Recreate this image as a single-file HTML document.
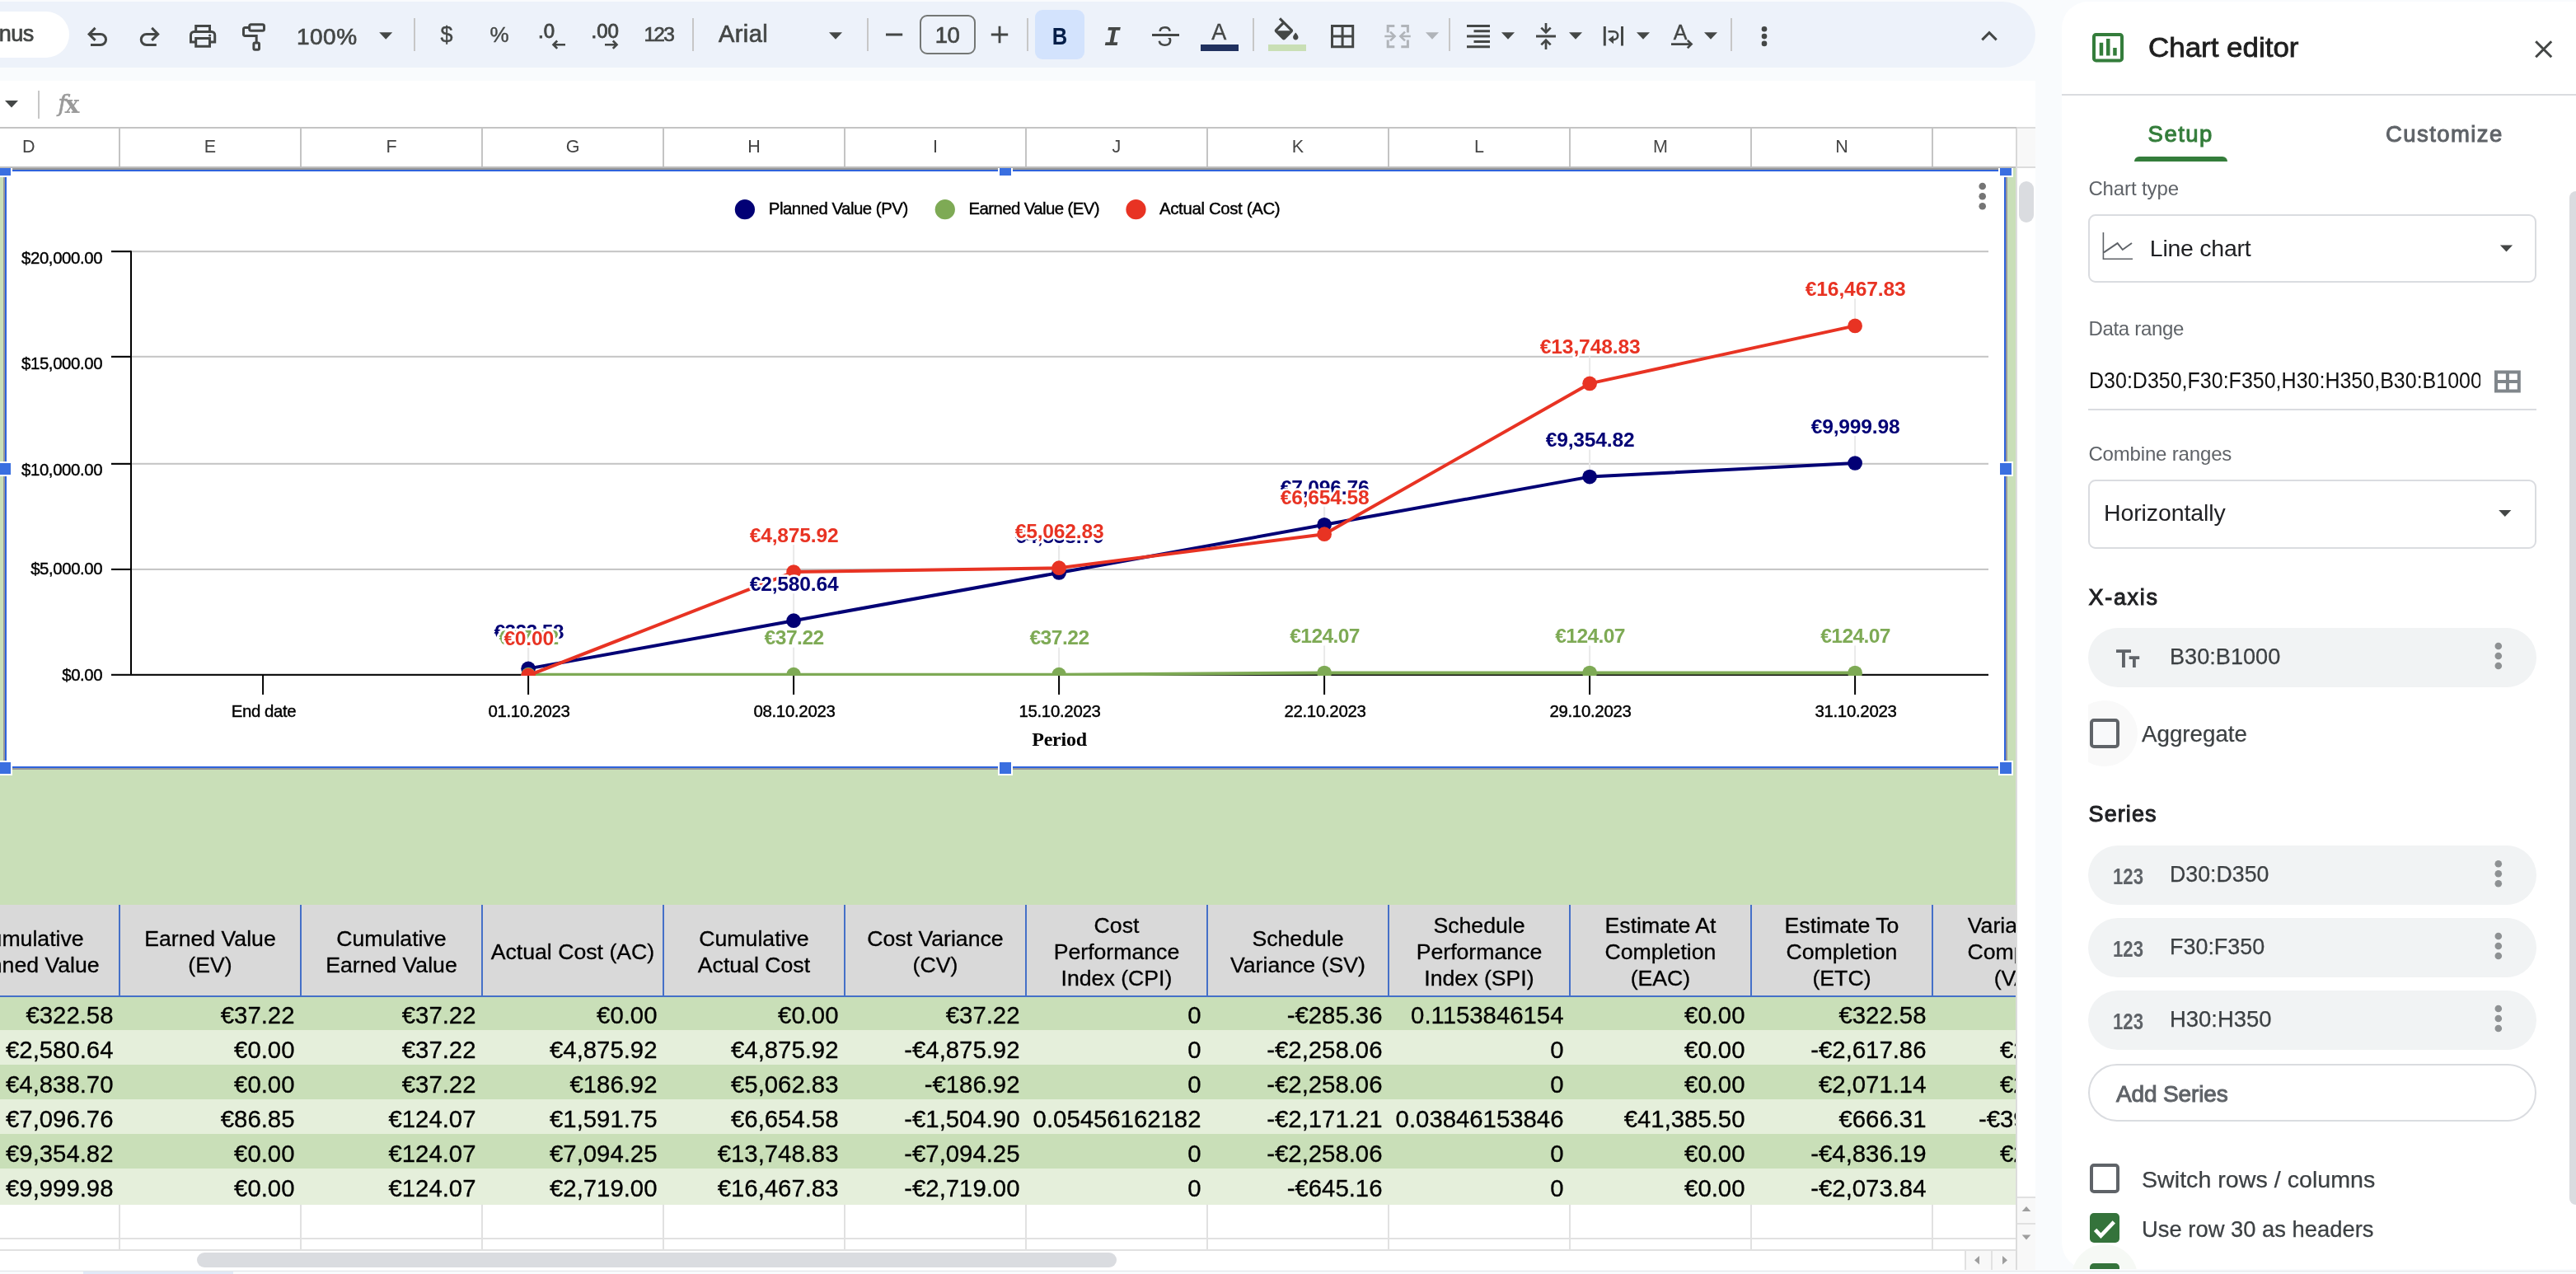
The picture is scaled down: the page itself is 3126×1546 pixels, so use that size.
<!DOCTYPE html>
<html lang="en"><head><meta charset="utf-8"><title>Chart editor</title>
<style>
html,body{margin:0;padding:0}
body{width:3126px;height:1546px;overflow:hidden;position:relative;background:#f9fbfd;font-family:"Liberation Sans",sans-serif}
.a{position:absolute}
.t{position:absolute;white-space:nowrap}
svg{position:absolute;left:0;top:0;overflow:visible}
</style></head><body>
<div id="root" style="position:absolute;left:0;top:0;width:3126px;height:1546px;overflow:hidden;will-change:transform">

<div class="a" style="left:-40px;top:2px;width:2510px;height:80px;background:#edf2fa;border-radius:40px"></div>
<div class="a" style="left:-40px;top:14px;width:124px;height:56px;background:#fff;border-radius:28px"></div>
<div class="t" style='left:-1.20px;top:28.14px;font:27px/27px "Liberation Sans",sans-serif;color:#444746;letter-spacing:-0.511px;-webkit-text-stroke:0.7px #444746;'>nus</div>
<div class="t" style='left:360.00px;top:30.90px;font:28px/28px "Liberation Sans",sans-serif;color:#444746;letter-spacing:0.472px;-webkit-text-stroke:0.7px #444746;'>100%</div>
<div class="t" style='left:534.49px;top:28.64px;font:27px/27px "Liberation Sans",sans-serif;color:#444746;-webkit-text-stroke:0.4px #444746;'>$</div>
<div class="t" style='left:594.44px;top:28.99px;font:26px/26px "Liberation Sans",sans-serif;color:#444746;-webkit-text-stroke:0.4px #444746;'>%</div>
<div class="t" style='left:653.00px;top:25.68px;font:24px/24px "Liberation Sans",sans-serif;color:#444746;letter-spacing:-0.008px;-webkit-text-stroke:0.9px #444746;'>.0</div>
<div class="t" style='left:717.50px;top:25.68px;font:24px/24px "Liberation Sans",sans-serif;color:#444746;letter-spacing:0.046px;-webkit-text-stroke:0.9px #444746;'>.00</div>
<div class="t" style='left:781.50px;top:30.06px;font:24.5px/24.5px "Liberation Sans",sans-serif;color:#444746;letter-spacing:-1.792px;-webkit-text-stroke:0.7px #444746;'>123</div>
<div class="t" style='left:872.00px;top:26.75px;font:29px/29px "Liberation Sans",sans-serif;color:#444746;letter-spacing:0.397px;-webkit-text-stroke:0.7px #444746;'>Arial</div>
<div class="a" style="left:1116px;top:18px;width:64px;height:44px;border:2px solid #747775;border-radius:9px"></div>
<div class="t" style='left:1134.75px;top:28.72px;font:27.5px/27.5px "Liberation Sans",sans-serif;color:#444746;letter-spacing:-0.544px;-webkit-text-stroke:0.7px #444746;'>10</div>
<div class="a" style="left:1256px;top:12px;width:60px;height:60px;background:#d3e3fd;border-radius:9px"></div>
<div class="t" style='left:1275.02px;top:28.27px;font:bold 30.4px/30.4px "Liberation Sans",sans-serif;color:#041e49;transform:scaleX(0.84);'>B</div>
<div class="t" style='left:1340.10px;top:29.61px;font:italic bold 33px/33px "Liberation Mono",monospace;color:#444746;'>I</div>
<div class="t" style='left:1402.49px;top:27.00px;font:34.5px/34.5px "Liberation Sans",sans-serif;color:#444746;transform:scaleX(0.8);'>S</div>
<div class="a" style="left:1398px;top:38px;width:33px;height:8px;background:#edf2fa"></div>
<div class="a" style="left:1398px;top:40.5px;width:32.5px;height:3px;background:#444746"></div>
<div class="t" style='left:1470.30px;top:25.64px;font:27px/27px "Liberation Sans",sans-serif;color:#444746;-webkit-text-stroke:0.4px #444746;'>A</div>
<div class="a" style="left:1457px;top:54px;width:46px;height:7.6px;background:#20315f"></div>
<div class="a" style="left:1539px;top:54px;width:46px;height:7.6px;background:#c9dfb5"></div>
<div class="t" style='left:2030.66px;top:26.84px;font:25px/25px "Liberation Sans",sans-serif;color:#444746;-webkit-text-stroke:0.4px #444746;'>A</div>
<svg width="2470" height="100" viewBox="0 0 2470 100">
<rect x="502" y="22" width="2" height="40" fill="#c7c7c7"/>
<rect x="840" y="22" width="2" height="40" fill="#c7c7c7"/>
<rect x="1052" y="22" width="2" height="40" fill="#c7c7c7"/>
<rect x="1246" y="22" width="2" height="40" fill="#c7c7c7"/>
<rect x="1520" y="22" width="2" height="40" fill="#c7c7c7"/>
<rect x="1758" y="22" width="2" height="40" fill="#c7c7c7"/>
<rect x="2100" y="22" width="2" height="40" fill="#c7c7c7"/>
<path d="M460.2 39.3 h16 l-8 8.4z" fill="#444746"/>
<path d="M1006 39.3 h16 l-8 8.4z" fill="#444746"/>
<path d="M1730 39.3 h16 l-8 8.4z" fill="#b0b4b9"/>
<path d="M1822 39.3 h16 l-8 8.4z" fill="#444746"/>
<path d="M1904 39.3 h16 l-8 8.4z" fill="#444746"/>
<path d="M1986 39.3 h16 l-8 8.4z" fill="#444746"/>
<path d="M2068 39.3 h16 l-8 8.4z" fill="#444746"/>
<path d="M115.6 33.9 L108.1 41.4 L115.6 48.9 M108.1 41.4 H122 A6.55 6.55 0 0 1 122 54.5 H110" fill="none" stroke="#444746" stroke-width="3"/>
<path d="M184.2 33.9 L191.7 41.4 L184.2 48.9 M191.7 41.4 H177.8 A6.55 6.55 0 0 0 177.8 54.5 H189.8" fill="none" stroke="#444746" stroke-width="3"/>
<path d="M237.7 38.5 V31.5 H254.5 V38.5 M237.7 51 H231.5 V42.5 a4 4 0 0 1 4 -4 H256.7 a4 4 0 0 1 4 4 V51 H254.5 M237.7 46.5 H254.5 V56.2 H237.7 Z" fill="none" stroke="#444746" stroke-width="3"/>
<circle cx="254.6" cy="43" r="1.6" fill="#444746"/>
<rect x="302.7" y="29.8" width="17.8" height="7.4" rx="2" fill="none" stroke="#444746" stroke-width="3"/>
<path d="M302 33.5 H297.2 a1.7 1.7 0 0 0 -1.7 1.7 V41.8 a1.7 1.7 0 0 0 1.7 1.7 H311.2 V51.5" fill="none" stroke="#444746" stroke-width="3"/>
<rect x="307.9" y="52" width="6.6" height="8.3" rx="1.5" fill="none" stroke="#444746" stroke-width="3"/>
<path d="M686 54.2 H671.5 M676.2 49.5 L671.5 54.2 L676.2 58.9" fill="none" stroke="#444746" stroke-width="2.6"/>
<path d="M734 54.2 H748.5 M743.8 49.5 L748.5 54.2 L743.8 58.9" fill="none" stroke="#444746" stroke-width="2.6"/>
<path d="M1075 42 H1095.2 M1202.8 42 H1223.2 M1213 31.8 V52.2" fill="none" stroke="#444746" stroke-width="2.8"/>
<path transform="translate(1541.90 21.2) scale(1.6)" fill="#444746" d="M16.56 8.94L7.62 0 6.21 1.41l2.38 2.38-5.15 5.15c-.59.59-.59 1.54 0 2.12l5.5 5.5c.29.29.68.44 1.06.44s.77-.15 1.06-.44l5.5-5.5c.59-.58.59-1.53 0-2.12zM5.21 10L10 5.21 14.79 10H5.21zM19 11.5s-2 2.17-2 3.5c0 1.1.9 2 2 2s2-.9 2-2c0-1.33-2-3.5-2-3.5z"/>
<path d="M1616.5 31.5 H1641.7 V56.7 H1616.5 Z M1629.1 31.5 V56.7 M1616.5 44.1 H1641.7" fill="none" stroke="#444746" stroke-width="3"/>
<path d="M1692.3 31.4 H1684.2 V39.6 M1684.2 48.4 V56.8 H1692.3 M1700.3 31.4 H1708.4 V39.6 M1708.4 48.4 V56.8 H1700.3" fill="none" stroke="#b0b4b9" stroke-width="3"/>
<path d="M1680.3 44 H1691 M1711.8 44 H1701" fill="none" stroke="#b0b4b9" stroke-width="2.6"/>
<path d="M1687 38.6 L1692.6 44 L1687 49.4 M1705 38.6 L1699.4 44 L1705 49.4" fill="none" stroke="#b0b4b9" stroke-width="2.6"/>
<path d="M1780 31.5 H1808 M1788.5 37.8 H1808 M1780 44.1 H1808 M1788.5 50.4 H1808 M1780 56.7 H1808" fill="none" stroke="#444746" stroke-width="3"/>
<path d="M1864 44 H1888" fill="none" stroke="#444746" stroke-width="3"/>
<path d="M1876 28 V38.5 M1870.3 33.6 L1876 39.3 L1881.7 33.6 M1876 60 V49.5 M1870.3 54.4 L1876 48.7 L1881.7 54.4" fill="none" stroke="#444746" stroke-width="2.7"/>
<path d="M1947.3 32 V55.5 M1968.5 32 V55.5" fill="none" stroke="#444746" stroke-width="3"/>
<path d="M1951.5 38.3 H1958.3 a4.9 4.9 0 0 1 0 9.8 H1956" fill="none" stroke="#444746" stroke-width="2.6"/>
<path d="M1951.6 48.1 L1958 43 V53.2 Z" fill="#444746"/>
<path d="M2028 53.6 H2052 M2047.8 48.9 L2052.6 53.6 L2047.8 58.3" fill="none" stroke="#444746" stroke-width="2.6"/>
<circle cx="2141" cy="35.3" r="3.3" fill="#444746"/>
<circle cx="2141" cy="44.1" r="3.3" fill="#444746"/>
<circle cx="2141" cy="52.9" r="3.3" fill="#444746"/>
<path d="M2405.3 48.4 L2414 39.7 L2422.7 48.4" fill="none" stroke="#444746" stroke-width="3"/>
</svg>
<div class="a" style="left:0;top:98px;width:2470px;height:58px;background:#fff"></div>
<svg width="200" height="160"><path d="M6 122 h16 l-8 8.4z" fill="#444746"/><rect x="46" y="110" width="2" height="34" fill="#c7c7c7"/></svg>
<div class="t" style="left:70.5px;top:112.11px;font:italic 28px/28px 'DejaVu Serif',serif;color:#9a9a9a;-webkit-text-stroke:0.7px #9a9a9a">f</div>
<div class="t" style="left:78.6px;top:111.52px;font:bold 30px/30px 'DejaVu Serif',serif;color:#9a9a9a">x</div>
<div class="a" style="left:0;top:154px;width:2447px;height:2px;background:#c4c4c4"></div><div class="a" style="left:2447px;top:154px;width:23px;height:2px;background:#dcdcdc"></div>
<div class="a" style="left:0;top:156px;width:2446px;height:47px;background:#fff"></div>
<div class="a" style="left:2446px;top:156px;width:24px;height:47px;background:#f8f8f8;border-left:2px solid #d8d8d8;box-sizing:border-box"></div>
<div class="a" style="left:144px;top:156px;width:2px;height:47px;background:#c4c4c4"></div>
<div class="a" style="left:364px;top:156px;width:2px;height:47px;background:#c4c4c4"></div>
<div class="a" style="left:584px;top:156px;width:2px;height:47px;background:#c4c4c4"></div>
<div class="a" style="left:804px;top:156px;width:2px;height:47px;background:#c4c4c4"></div>
<div class="a" style="left:1024px;top:156px;width:2px;height:47px;background:#c4c4c4"></div>
<div class="a" style="left:1244px;top:156px;width:2px;height:47px;background:#c4c4c4"></div>
<div class="a" style="left:1464px;top:156px;width:2px;height:47px;background:#c4c4c4"></div>
<div class="a" style="left:1684px;top:156px;width:2px;height:47px;background:#c4c4c4"></div>
<div class="a" style="left:1904px;top:156px;width:2px;height:47px;background:#c4c4c4"></div>
<div class="a" style="left:2124px;top:156px;width:2px;height:47px;background:#c4c4c4"></div>
<div class="a" style="left:2344px;top:156px;width:2px;height:47px;background:#c4c4c4"></div>
<div class="t" style='left:27.04px;top:168.40px;font:21.5px/21.5px "Liberation Sans",sans-serif;color:#444;'>D</div>
<div class="t" style='left:247.83px;top:168.40px;font:21.5px/21.5px "Liberation Sans",sans-serif;color:#444;'>E</div>
<div class="t" style='left:468.43px;top:168.40px;font:21.5px/21.5px "Liberation Sans",sans-serif;color:#444;'>F</div>
<div class="t" style='left:686.64px;top:168.40px;font:21.5px/21.5px "Liberation Sans",sans-serif;color:#444;'>G</div>
<div class="t" style='left:907.24px;top:168.40px;font:21.5px/21.5px "Liberation Sans",sans-serif;color:#444;'>H</div>
<div class="t" style='left:1132.01px;top:168.40px;font:21.5px/21.5px "Liberation Sans",sans-serif;color:#444;'>I</div>
<div class="t" style='left:1349.62px;top:168.40px;font:21.5px/21.5px "Liberation Sans",sans-serif;color:#444;'>J</div>
<div class="t" style='left:1567.83px;top:168.40px;font:21.5px/21.5px "Liberation Sans",sans-serif;color:#444;'>K</div>
<div class="t" style='left:1789.02px;top:168.40px;font:21.5px/21.5px "Liberation Sans",sans-serif;color:#444;'>L</div>
<div class="t" style='left:2006.05px;top:168.40px;font:21.5px/21.5px "Liberation Sans",sans-serif;color:#444;'>M</div>
<div class="t" style='left:2227.24px;top:168.40px;font:21.5px/21.5px "Liberation Sans",sans-serif;color:#444;'>N</div>
<div class="a" style="left:0;top:202px;width:2446px;height:3px;background:#bdbdbd"></div><div class="a" style="left:2446px;top:202px;width:24px;height:2px;background:#dcdcdc"></div>
<div class="a" style="left:0;top:204px;width:2446px;height:894px;background:#c9dfb8"></div>
<div class="a" style="left:4px;top:204px;width:2432px;height:730px;background:#989898"></div>
<div class="a" style="left:6px;top:206px;width:2428.4px;height:726px;background:#2f63dc"></div>
<div class="a" style="left:8px;top:208px;width:2424.4px;height:722px;background:#fff"></div>
<svg width="2446" height="940" viewBox="0 0 2446 940" style="font-family:'Liberation Sans',sans-serif">
<rect x="160" y="304.2" width="2253" height="2" fill="#c4c4c4"/>
<rect x="160" y="431.8" width="2253" height="2" fill="#c4c4c4"/>
<rect x="160" y="561.8" width="2253" height="2" fill="#c4c4c4"/>
<rect x="160" y="689.9" width="2253" height="2" fill="#c4c4c4"/>
<rect x="158" y="304.3" width="2" height="515.6" fill="#000"/>
<rect x="135" y="817.8" width="2278" height="2.2" fill="#111"/>
<rect x="135" y="304.1" width="24" height="2.1" fill="#000"/>
<rect x="135" y="431.8" width="24" height="2.1" fill="#000"/>
<rect x="135" y="561.8" width="24" height="2.1" fill="#000"/>
<rect x="135" y="689.9" width="24" height="2.1" fill="#000"/>
<rect x="318.1" y="818.9" width="2" height="24" fill="#000"/>
<rect x="640.1" y="818.9" width="2" height="24" fill="#000"/>
<rect x="962.1" y="818.9" width="2" height="24" fill="#000"/>
<rect x="1284.1" y="818.9" width="2" height="24" fill="#000"/>
<rect x="1606.1" y="818.9" width="2" height="24" fill="#000"/>
<rect x="1928.1" y="818.9" width="2" height="24" fill="#000"/>
<rect x="2250.1" y="818.9" width="2" height="24" fill="#000"/>
<clipPath id="pc"><rect x="159" y="300" width="2254" height="520.0"/></clipPath>
<rect x="640.1" y="778.4" width="2" height="24" fill="#e9e9e9"/>
<rect x="962.1" y="720.2" width="2" height="24" fill="#e9e9e9"/>
<rect x="1284.1" y="662.0" width="2" height="24" fill="#e9e9e9"/>
<rect x="1606.1" y="603.8" width="2" height="24" fill="#e9e9e9"/>
<rect x="1928.1" y="545.6" width="2" height="24" fill="#e9e9e9"/>
<rect x="2250.1" y="529.0" width="2" height="24" fill="#e9e9e9"/>
<rect x="640.1" y="785.7" width="2" height="24" fill="#e9e9e9"/>
<rect x="962.1" y="785.7" width="2" height="24" fill="#e9e9e9"/>
<rect x="1284.1" y="785.7" width="2" height="24" fill="#e9e9e9"/>
<rect x="1606.1" y="783.5" width="2" height="24" fill="#e9e9e9"/>
<rect x="1928.1" y="783.5" width="2" height="24" fill="#e9e9e9"/>
<rect x="2250.1" y="783.5" width="2" height="24" fill="#e9e9e9"/>
<rect x="640.1" y="786.7" width="2" height="24" fill="#e9e9e9"/>
<rect x="962.1" y="661.1" width="2" height="24" fill="#e9e9e9"/>
<rect x="1284.1" y="656.2" width="2" height="24" fill="#e9e9e9"/>
<rect x="1606.1" y="615.2" width="2" height="24" fill="#e9e9e9"/>
<rect x="1928.1" y="432.4" width="2" height="24" fill="#e9e9e9"/>
<rect x="2250.1" y="362.4" width="2" height="24" fill="#e9e9e9"/>
<g clip-path="url(#pc)">
<polyline points="641.1,811.4 963.1,753.2 1285.1,695.0 1607.1,636.8 1929.1,578.6 2251.1,562.0" fill="none" stroke="#020075" stroke-width="4" stroke-linejoin="round"/>
<circle cx="641.1" cy="811.4" r="8.85" fill="#020075"/>
<circle cx="963.1" cy="753.2" r="8.85" fill="#020075"/>
<circle cx="1285.1" cy="695.0" r="8.85" fill="#020075"/>
<circle cx="1607.1" cy="636.8" r="8.85" fill="#020075"/>
<circle cx="1929.1" cy="578.6" r="8.85" fill="#020075"/>
<circle cx="2251.1" cy="562.0" r="8.85" fill="#020075"/>
<polyline points="641.1,818.7 963.1,818.7 1285.1,818.7 1607.1,816.5 1929.1,816.5 2251.1,816.5" fill="none" stroke="#7eaa55" stroke-width="4" stroke-linejoin="round"/>
<circle cx="641.1" cy="818.7" r="8.85" fill="#7eaa55"/>
<circle cx="963.1" cy="818.7" r="8.85" fill="#7eaa55"/>
<circle cx="1285.1" cy="818.7" r="8.85" fill="#7eaa55"/>
<circle cx="1607.1" cy="816.5" r="8.85" fill="#7eaa55"/>
<circle cx="1929.1" cy="816.5" r="8.85" fill="#7eaa55"/>
<circle cx="2251.1" cy="816.5" r="8.85" fill="#7eaa55"/>
<polyline points="641.1,819.7 963.1,694.1 1285.1,689.2 1607.1,648.2 1929.1,465.4 2251.1,395.4" fill="none" stroke="#e83323" stroke-width="4" stroke-linejoin="round"/>
<circle cx="641.1" cy="819.7" r="8.85" fill="#e83323"/>
<circle cx="963.1" cy="694.1" r="8.85" fill="#e83323"/>
<circle cx="1285.1" cy="689.2" r="8.85" fill="#e83323"/>
<circle cx="1607.1" cy="648.2" r="8.85" fill="#e83323"/>
<circle cx="1929.1" cy="465.4" r="8.85" fill="#e83323"/>
<circle cx="2251.1" cy="395.4" r="8.85" fill="#e83323"/>
</g>
<text x="599.4" y="774.9" font-size="24.6" font-weight="bold" letter-spacing="-0.632" fill="#020075" stroke="#fff" stroke-width="5.5" stroke-linejoin="round" paint-order="stroke">€322.58</text>
<text x="909.8" y="716.7" font-size="24.6" font-weight="bold" letter-spacing="-0.204" fill="#020075" stroke="#fff" stroke-width="5.5" stroke-linejoin="round" paint-order="stroke">€2,580.64</text>
<text x="1231.8" y="658.5" font-size="24.6" font-weight="bold" letter-spacing="-0.204" fill="#020075" stroke="#fff" stroke-width="5.5" stroke-linejoin="round" paint-order="stroke">€4,838.70</text>
<text x="1553.8" y="600.3" font-size="24.6" font-weight="bold" letter-spacing="-0.204" fill="#020075" stroke="#fff" stroke-width="5.5" stroke-linejoin="round" paint-order="stroke">€7,096.76</text>
<text x="1875.8" y="542.1" font-size="24.6" font-weight="bold" letter-spacing="-0.204" fill="#020075" stroke="#fff" stroke-width="5.5" stroke-linejoin="round" paint-order="stroke">€9,354.82</text>
<text x="2197.8" y="525.5" font-size="24.6" font-weight="bold" letter-spacing="-0.204" fill="#020075" stroke="#fff" stroke-width="5.5" stroke-linejoin="round" paint-order="stroke">€9,999.98</text>
<text x="605.5" y="782.2" font-size="24.6" font-weight="bold" letter-spacing="-0.490" fill="#7eaa55" stroke="#fff" stroke-width="5.5" stroke-linejoin="round" paint-order="stroke">€37.22</text>
<text x="927.5" y="782.2" font-size="24.6" font-weight="bold" letter-spacing="-0.490" fill="#7eaa55" stroke="#fff" stroke-width="5.5" stroke-linejoin="round" paint-order="stroke">€37.22</text>
<text x="1249.4" y="782.2" font-size="24.6" font-weight="bold" letter-spacing="-0.490" fill="#7eaa55" stroke="#fff" stroke-width="5.5" stroke-linejoin="round" paint-order="stroke">€37.22</text>
<text x="1565.3" y="780.0" font-size="24.6" font-weight="bold" letter-spacing="-0.632" fill="#7eaa55" stroke="#fff" stroke-width="5.5" stroke-linejoin="round" paint-order="stroke">€124.07</text>
<text x="1887.3" y="780.0" font-size="24.6" font-weight="bold" letter-spacing="-0.632" fill="#7eaa55" stroke="#fff" stroke-width="5.5" stroke-linejoin="round" paint-order="stroke">€124.07</text>
<text x="2209.3" y="780.0" font-size="24.6" font-weight="bold" letter-spacing="-0.632" fill="#7eaa55" stroke="#fff" stroke-width="5.5" stroke-linejoin="round" paint-order="stroke">€124.07</text>
<text x="611.4" y="783.2" font-size="24.6" font-weight="bold" letter-spacing="-0.212" fill="#e83323" stroke="#fff" stroke-width="5.5" stroke-linejoin="round" paint-order="stroke">€0.00</text>
<text x="909.8" y="657.6" font-size="24.6" font-weight="bold" letter-spacing="-0.204" fill="#e83323" stroke="#fff" stroke-width="5.5" stroke-linejoin="round" paint-order="stroke">€4,875.92</text>
<text x="1231.8" y="652.7" font-size="24.6" font-weight="bold" letter-spacing="-0.204" fill="#e83323" stroke="#fff" stroke-width="5.5" stroke-linejoin="round" paint-order="stroke">€5,062.83</text>
<text x="1553.8" y="611.7" font-size="24.6" font-weight="bold" letter-spacing="-0.204" fill="#e83323" stroke="#fff" stroke-width="5.5" stroke-linejoin="round" paint-order="stroke">€6,654.58</text>
<text x="1868.8" y="428.9" font-size="24.6" font-weight="bold" letter-spacing="-0.142" fill="#e83323" stroke="#fff" stroke-width="5.5" stroke-linejoin="round" paint-order="stroke">€13,748.83</text>
<text x="2190.8" y="358.9" font-size="24.6" font-weight="bold" letter-spacing="-0.142" fill="#e83323" stroke="#fff" stroke-width="5.5" stroke-linejoin="round" paint-order="stroke">€16,467.83</text>
<circle cx="903.9" cy="254.2" r="12.1" fill="#020075"/>
<circle cx="1146.8" cy="254.2" r="12.1" fill="#7eaa55"/>
<circle cx="1378.5" cy="254.2" r="12.1" fill="#e83323"/>
<text x="932.8" y="260.0" font-size="20.4" letter-spacing="-0.481" fill="#000" stroke="#000" stroke-width="0.4">Planned Value (PV)</text>
<text x="1175.6" y="260.0" font-size="20.4" letter-spacing="-0.599" fill="#000" stroke="#000" stroke-width="0.4">Earned Value (EV)</text>
<text x="1407.0" y="260.0" font-size="20.4" letter-spacing="-0.350" fill="#000" stroke="#000" stroke-width="0.4">Actual Cost (AC)</text>
<text x="26.0" y="320.0" font-size="20.4" letter-spacing="-0.390" fill="#000" stroke="#000" stroke-width="0.4">$20,000.00</text>
<text x="26.0" y="448.2" font-size="20.4" letter-spacing="-0.390" fill="#000" stroke="#000" stroke-width="0.4">$15,000.00</text>
<text x="26.0" y="577.4" font-size="20.4" letter-spacing="-0.390" fill="#000" stroke="#000" stroke-width="0.4">$10,000.00</text>
<text x="37.2" y="696.5" font-size="20.4" letter-spacing="-0.417" fill="#000" stroke="#000" stroke-width="0.4">$5,000.00</text>
<text x="75.3" y="825.5" font-size="20.4" letter-spacing="-0.430" fill="#000" stroke="#000" stroke-width="0.4">$0.00</text>
<text x="280.8" y="869.7" font-size="20.4" letter-spacing="-0.409" fill="#000" stroke="#000" stroke-width="0.4">End date</text>
<text x="592.4" y="869.7" font-size="20.4" letter-spacing="-0.290" fill="#000" stroke="#000" stroke-width="0.4">01.10.2023</text>
<text x="914.4" y="869.7" font-size="20.4" letter-spacing="-0.290" fill="#000" stroke="#000" stroke-width="0.4">08.10.2023</text>
<text x="1236.4" y="869.7" font-size="20.4" letter-spacing="-0.290" fill="#000" stroke="#000" stroke-width="0.4">15.10.2023</text>
<text x="1558.4" y="869.7" font-size="20.4" letter-spacing="-0.290" fill="#000" stroke="#000" stroke-width="0.4">22.10.2023</text>
<text x="1880.4" y="869.7" font-size="20.4" letter-spacing="-0.290" fill="#000" stroke="#000" stroke-width="0.4">29.10.2023</text>
<text x="2202.4" y="869.7" font-size="20.4" letter-spacing="-0.290" fill="#000" stroke="#000" stroke-width="0.4">31.10.2023</text>
<text x="1252.2" y="905.2" font-size="24" letter-spacing="-0.213" fill="#000" font-family="Liberation Serif,serif" font-weight="bold">Period</text>
<circle cx="2405.7" cy="226" r="4.3" fill="#757575"/>
<circle cx="2405.7" cy="238.2" r="4.3" fill="#757575"/>
<circle cx="2405.7" cy="250.3" r="4.3" fill="#757575"/>
</svg>
<div class="a" style="left:0;top:204.4px;width:2470px;height:800px;overflow:hidden"><div class="a" style="left:0;top:-204.4px">
<div class="a" style="left:-3px;top:197px;width:14px;height:14px;background:#3a6fe0;border:2px solid #fff"></div>
<div class="a" style="left:-3px;top:560px;width:14px;height:14px;background:#3a6fe0;border:2px solid #fff"></div>
<div class="a" style="left:-3px;top:923px;width:14px;height:14px;background:#3a6fe0;border:2px solid #fff"></div>
<div class="a" style="left:1211px;top:197px;width:14px;height:14px;background:#3a6fe0;border:2px solid #fff"></div>
<div class="a" style="left:1211px;top:923px;width:14px;height:14px;background:#3a6fe0;border:2px solid #fff"></div>
<div class="a" style="left:2424.5px;top:197px;width:14px;height:14px;background:#3a6fe0;border:2px solid #fff"></div>
<div class="a" style="left:2424.5px;top:560px;width:14px;height:14px;background:#3a6fe0;border:2px solid #fff"></div>
<div class="a" style="left:2424.5px;top:923px;width:14px;height:14px;background:#3a6fe0;border:2px solid #fff"></div>
</div></div>
<div class="a" style="left:0;top:202px;width:2446px;height:2.4px;background:#bdbdbd"></div>
<div class="a" style="left:0;top:156px;width:20px;height:46px;background:#fff"></div>
<div class="a" style="left:0;top:1098px;width:2446px;height:110px;background:#d9d9d9"></div>
<div class="a" style="left:0;top:1208px;width:2446px;height:42px;background:#c9dfb8"></div>
<div class="a" style="left:0;top:1250px;width:2446px;height:42px;background:#e5efdb"></div>
<div class="a" style="left:0;top:1292px;width:2446px;height:42px;background:#c9dfb8"></div>
<div class="a" style="left:0;top:1334px;width:2446px;height:42px;background:#e5efdb"></div>
<div class="a" style="left:0;top:1376px;width:2446px;height:42px;background:#c9dfb8"></div>
<div class="a" style="left:0;top:1418px;width:2446px;height:44px;background:#e5efdb"></div>
<div class="a" style="left:0;top:1461.7px;width:2446px;height:56.3px;background:#fff"></div>
<div class="a" style="left:144px;top:1098px;width:2px;height:111px;background:#4570c8"></div>
<div class="a" style="left:144px;top:1462px;width:2px;height:55px;background:#e1e1e1"></div>
<div class="a" style="left:364px;top:1098px;width:2px;height:111px;background:#4570c8"></div>
<div class="a" style="left:364px;top:1462px;width:2px;height:55px;background:#e1e1e1"></div>
<div class="a" style="left:584px;top:1098px;width:2px;height:111px;background:#4570c8"></div>
<div class="a" style="left:584px;top:1462px;width:2px;height:55px;background:#e1e1e1"></div>
<div class="a" style="left:804px;top:1098px;width:2px;height:111px;background:#4570c8"></div>
<div class="a" style="left:804px;top:1462px;width:2px;height:55px;background:#e1e1e1"></div>
<div class="a" style="left:1024px;top:1098px;width:2px;height:111px;background:#4570c8"></div>
<div class="a" style="left:1024px;top:1462px;width:2px;height:55px;background:#e1e1e1"></div>
<div class="a" style="left:1244px;top:1098px;width:2px;height:111px;background:#4570c8"></div>
<div class="a" style="left:1244px;top:1462px;width:2px;height:55px;background:#e1e1e1"></div>
<div class="a" style="left:1464px;top:1098px;width:2px;height:111px;background:#4570c8"></div>
<div class="a" style="left:1464px;top:1462px;width:2px;height:55px;background:#e1e1e1"></div>
<div class="a" style="left:1684px;top:1098px;width:2px;height:111px;background:#4570c8"></div>
<div class="a" style="left:1684px;top:1462px;width:2px;height:55px;background:#e1e1e1"></div>
<div class="a" style="left:1904px;top:1098px;width:2px;height:111px;background:#4570c8"></div>
<div class="a" style="left:1904px;top:1462px;width:2px;height:55px;background:#e1e1e1"></div>
<div class="a" style="left:2124px;top:1098px;width:2px;height:111px;background:#4570c8"></div>
<div class="a" style="left:2124px;top:1462px;width:2px;height:55px;background:#e1e1e1"></div>
<div class="a" style="left:2344px;top:1098px;width:2px;height:111px;background:#4570c8"></div>
<div class="a" style="left:2344px;top:1462px;width:2px;height:55px;background:#e1e1e1"></div>
<div class="a" style="left:0;top:1207.8px;width:2446px;height:2.2px;background:#4570c8"></div>
<div class="a" style="left:0;top:1502px;width:2446px;height:2px;background:#e1e1e1"></div>
<div class="a" style="left:0;top:1516px;width:2470px;height:2px;background:#e1e1e1"></div>
<div class="a" style="left:0;top:1098px;width:2446px;height:420px;overflow:hidden">
<div class="t" style='left:-31.70px;top:27.62px;font:26.67px/26.67px "Liberation Sans",sans-serif;color:#000;-webkit-text-stroke:0.3px #000;'>Cumulative</div>
<div class="t" style='left:-50.76px;top:59.82px;font:26.67px/26.67px "Liberation Sans",sans-serif;color:#000;-webkit-text-stroke:0.3px #000;'>Planned Value</div>
<div class="t" style='left:31.48px;top:118.57px;font:29.33px/29.33px "Liberation Sans",sans-serif;color:#000;-webkit-text-stroke:0.3px #000;'>€322.58</div>
<div class="t" style='left:7.02px;top:160.57px;font:29.33px/29.33px "Liberation Sans",sans-serif;color:#000;-webkit-text-stroke:0.3px #000;'>€2,580.64</div>
<div class="t" style='left:7.02px;top:202.57px;font:29.33px/29.33px "Liberation Sans",sans-serif;color:#000;-webkit-text-stroke:0.3px #000;'>€4,838.70</div>
<div class="t" style='left:7.02px;top:244.57px;font:29.33px/29.33px "Liberation Sans",sans-serif;color:#000;-webkit-text-stroke:0.3px #000;'>€7,096.76</div>
<div class="t" style='left:7.02px;top:286.57px;font:29.33px/29.33px "Liberation Sans",sans-serif;color:#000;-webkit-text-stroke:0.3px #000;'>€9,354.82</div>
<div class="t" style='left:7.02px;top:328.57px;font:29.33px/29.33px "Liberation Sans",sans-serif;color:#000;-webkit-text-stroke:0.3px #000;'>€9,999.98</div>
<div class="t" style='left:175.18px;top:27.62px;font:26.67px/26.67px "Liberation Sans",sans-serif;color:#000;-webkit-text-stroke:0.3px #000;'>Earned Value</div>
<div class="t" style='left:228.33px;top:59.82px;font:26.67px/26.67px "Liberation Sans",sans-serif;color:#000;-webkit-text-stroke:0.3px #000;'>(EV)</div>
<div class="t" style='left:267.79px;top:118.57px;font:29.33px/29.33px "Liberation Sans",sans-serif;color:#000;-webkit-text-stroke:0.3px #000;'>€37.22</div>
<div class="t" style='left:284.10px;top:160.57px;font:29.33px/29.33px "Liberation Sans",sans-serif;color:#000;-webkit-text-stroke:0.3px #000;'>€0.00</div>
<div class="t" style='left:284.10px;top:202.57px;font:29.33px/29.33px "Liberation Sans",sans-serif;color:#000;-webkit-text-stroke:0.3px #000;'>€0.00</div>
<div class="t" style='left:267.79px;top:244.57px;font:29.33px/29.33px "Liberation Sans",sans-serif;color:#000;-webkit-text-stroke:0.3px #000;'>€86.85</div>
<div class="t" style='left:284.10px;top:286.57px;font:29.33px/29.33px "Liberation Sans",sans-serif;color:#000;-webkit-text-stroke:0.3px #000;'>€0.00</div>
<div class="t" style='left:284.10px;top:328.57px;font:29.33px/29.33px "Liberation Sans",sans-serif;color:#000;-webkit-text-stroke:0.3px #000;'>€0.00</div>
<div class="t" style='left:408.30px;top:27.62px;font:26.67px/26.67px "Liberation Sans",sans-serif;color:#000;-webkit-text-stroke:0.3px #000;'>Cumulative</div>
<div class="t" style='left:395.18px;top:59.82px;font:26.67px/26.67px "Liberation Sans",sans-serif;color:#000;-webkit-text-stroke:0.3px #000;'>Earned Value</div>
<div class="t" style='left:487.79px;top:118.57px;font:29.33px/29.33px "Liberation Sans",sans-serif;color:#000;-webkit-text-stroke:0.3px #000;'>€37.22</div>
<div class="t" style='left:487.79px;top:160.57px;font:29.33px/29.33px "Liberation Sans",sans-serif;color:#000;-webkit-text-stroke:0.3px #000;'>€37.22</div>
<div class="t" style='left:487.79px;top:202.57px;font:29.33px/29.33px "Liberation Sans",sans-serif;color:#000;-webkit-text-stroke:0.3px #000;'>€37.22</div>
<div class="t" style='left:471.48px;top:244.57px;font:29.33px/29.33px "Liberation Sans",sans-serif;color:#000;-webkit-text-stroke:0.3px #000;'>€124.07</div>
<div class="t" style='left:471.48px;top:286.57px;font:29.33px/29.33px "Liberation Sans",sans-serif;color:#000;-webkit-text-stroke:0.3px #000;'>€124.07</div>
<div class="t" style='left:471.48px;top:328.57px;font:29.33px/29.33px "Liberation Sans",sans-serif;color:#000;-webkit-text-stroke:0.3px #000;'>€124.07</div>
<div class="t" style='left:595.70px;top:43.72px;font:26.67px/26.67px "Liberation Sans",sans-serif;color:#000;-webkit-text-stroke:0.3px #000;'>Actual Cost (AC)</div>
<div class="t" style='left:724.10px;top:118.57px;font:29.33px/29.33px "Liberation Sans",sans-serif;color:#000;-webkit-text-stroke:0.3px #000;'>€0.00</div>
<div class="t" style='left:667.02px;top:160.57px;font:29.33px/29.33px "Liberation Sans",sans-serif;color:#000;-webkit-text-stroke:0.3px #000;'>€4,875.92</div>
<div class="t" style='left:691.48px;top:202.57px;font:29.33px/29.33px "Liberation Sans",sans-serif;color:#000;-webkit-text-stroke:0.3px #000;'>€186.92</div>
<div class="t" style='left:667.02px;top:244.57px;font:29.33px/29.33px "Liberation Sans",sans-serif;color:#000;-webkit-text-stroke:0.3px #000;'>€1,591.75</div>
<div class="t" style='left:667.02px;top:286.57px;font:29.33px/29.33px "Liberation Sans",sans-serif;color:#000;-webkit-text-stroke:0.3px #000;'>€7,094.25</div>
<div class="t" style='left:667.02px;top:328.57px;font:29.33px/29.33px "Liberation Sans",sans-serif;color:#000;-webkit-text-stroke:0.3px #000;'>€2,719.00</div>
<div class="t" style='left:848.30px;top:27.62px;font:26.67px/26.67px "Liberation Sans",sans-serif;color:#000;-webkit-text-stroke:0.3px #000;'>Cumulative</div>
<div class="t" style='left:846.81px;top:59.82px;font:26.67px/26.67px "Liberation Sans",sans-serif;color:#000;-webkit-text-stroke:0.3px #000;'>Actual Cost</div>
<div class="t" style='left:944.10px;top:118.57px;font:29.33px/29.33px "Liberation Sans",sans-serif;color:#000;-webkit-text-stroke:0.3px #000;'>€0.00</div>
<div class="t" style='left:887.02px;top:160.57px;font:29.33px/29.33px "Liberation Sans",sans-serif;color:#000;-webkit-text-stroke:0.3px #000;'>€4,875.92</div>
<div class="t" style='left:887.02px;top:202.57px;font:29.33px/29.33px "Liberation Sans",sans-serif;color:#000;-webkit-text-stroke:0.3px #000;'>€5,062.83</div>
<div class="t" style='left:887.02px;top:244.57px;font:29.33px/29.33px "Liberation Sans",sans-serif;color:#000;-webkit-text-stroke:0.3px #000;'>€6,654.58</div>
<div class="t" style='left:870.71px;top:286.57px;font:29.33px/29.33px "Liberation Sans",sans-serif;color:#000;-webkit-text-stroke:0.3px #000;'>€13,748.83</div>
<div class="t" style='left:870.71px;top:328.57px;font:29.33px/29.33px "Liberation Sans",sans-serif;color:#000;-webkit-text-stroke:0.3px #000;'>€16,467.83</div>
<div class="t" style='left:1052.24px;top:27.62px;font:26.67px/26.67px "Liberation Sans",sans-serif;color:#000;-webkit-text-stroke:0.3px #000;'>Cost Variance</div>
<div class="t" style='left:1107.59px;top:59.82px;font:26.67px/26.67px "Liberation Sans",sans-serif;color:#000;-webkit-text-stroke:0.3px #000;'>(CV)</div>
<div class="t" style='left:1147.79px;top:118.57px;font:29.33px/29.33px "Liberation Sans",sans-serif;color:#000;-webkit-text-stroke:0.3px #000;'>€37.22</div>
<div class="t" style='left:1097.25px;top:160.57px;font:29.33px/29.33px "Liberation Sans",sans-serif;color:#000;-webkit-text-stroke:0.3px #000;'>-€4,875.92</div>
<div class="t" style='left:1121.71px;top:202.57px;font:29.33px/29.33px "Liberation Sans",sans-serif;color:#000;-webkit-text-stroke:0.3px #000;'>-€186.92</div>
<div class="t" style='left:1097.25px;top:244.57px;font:29.33px/29.33px "Liberation Sans",sans-serif;color:#000;-webkit-text-stroke:0.3px #000;'>-€1,504.90</div>
<div class="t" style='left:1097.25px;top:286.57px;font:29.33px/29.33px "Liberation Sans",sans-serif;color:#000;-webkit-text-stroke:0.3px #000;'>-€7,094.25</div>
<div class="t" style='left:1097.25px;top:328.57px;font:29.33px/29.33px "Liberation Sans",sans-serif;color:#000;-webkit-text-stroke:0.3px #000;'>-€2,719.00</div>
<div class="t" style='left:1327.58px;top:11.52px;font:26.67px/26.67px "Liberation Sans",sans-serif;color:#000;-webkit-text-stroke:0.3px #000;'>Cost</div>
<div class="t" style='left:1278.66px;top:43.72px;font:26.67px/26.67px "Liberation Sans",sans-serif;color:#000;-webkit-text-stroke:0.3px #000;'>Performance</div>
<div class="t" style='left:1287.56px;top:75.92px;font:26.67px/26.67px "Liberation Sans",sans-serif;color:#000;-webkit-text-stroke:0.3px #000;'>Index (CPI)</div>
<div class="t" style='left:1441.19px;top:118.57px;font:29.33px/29.33px "Liberation Sans",sans-serif;color:#000;-webkit-text-stroke:0.3px #000;'>0</div>
<div class="t" style='left:1441.19px;top:160.57px;font:29.33px/29.33px "Liberation Sans",sans-serif;color:#000;-webkit-text-stroke:0.3px #000;'>0</div>
<div class="t" style='left:1441.19px;top:202.57px;font:29.33px/29.33px "Liberation Sans",sans-serif;color:#000;-webkit-text-stroke:0.3px #000;'>0</div>
<div class="t" style='left:1253.61px;top:244.57px;font:29.33px/29.33px "Liberation Sans",sans-serif;color:#000;-webkit-text-stroke:0.3px #000;'>0.05456162182</div>
<div class="t" style='left:1441.19px;top:286.57px;font:29.33px/29.33px "Liberation Sans",sans-serif;color:#000;-webkit-text-stroke:0.3px #000;'>0</div>
<div class="t" style='left:1441.19px;top:328.57px;font:29.33px/29.33px "Liberation Sans",sans-serif;color:#000;-webkit-text-stroke:0.3px #000;'>0</div>
<div class="t" style='left:1519.39px;top:27.62px;font:26.67px/26.67px "Liberation Sans",sans-serif;color:#000;-webkit-text-stroke:0.3px #000;'>Schedule</div>
<div class="t" style='left:1492.98px;top:59.82px;font:26.67px/26.67px "Liberation Sans",sans-serif;color:#000;-webkit-text-stroke:0.3px #000;'>Variance (SV)</div>
<div class="t" style='left:1561.71px;top:118.57px;font:29.33px/29.33px "Liberation Sans",sans-serif;color:#000;-webkit-text-stroke:0.3px #000;'>-€285.36</div>
<div class="t" style='left:1537.25px;top:160.57px;font:29.33px/29.33px "Liberation Sans",sans-serif;color:#000;-webkit-text-stroke:0.3px #000;'>-€2,258.06</div>
<div class="t" style='left:1537.25px;top:202.57px;font:29.33px/29.33px "Liberation Sans",sans-serif;color:#000;-webkit-text-stroke:0.3px #000;'>-€2,258.06</div>
<div class="t" style='left:1537.25px;top:244.57px;font:29.33px/29.33px "Liberation Sans",sans-serif;color:#000;-webkit-text-stroke:0.3px #000;'>-€2,171.21</div>
<div class="t" style='left:1537.25px;top:286.57px;font:29.33px/29.33px "Liberation Sans",sans-serif;color:#000;-webkit-text-stroke:0.3px #000;'>-€2,258.06</div>
<div class="t" style='left:1561.71px;top:328.57px;font:29.33px/29.33px "Liberation Sans",sans-serif;color:#000;-webkit-text-stroke:0.3px #000;'>-€645.16</div>
<div class="t" style='left:1739.39px;top:11.52px;font:26.67px/26.67px "Liberation Sans",sans-serif;color:#000;-webkit-text-stroke:0.3px #000;'>Schedule</div>
<div class="t" style='left:1718.66px;top:43.72px;font:26.67px/26.67px "Liberation Sans",sans-serif;color:#000;-webkit-text-stroke:0.3px #000;'>Performance</div>
<div class="t" style='left:1728.30px;top:75.92px;font:26.67px/26.67px "Liberation Sans",sans-serif;color:#000;-webkit-text-stroke:0.3px #000;'>Index (SPI)</div>
<div class="t" style='left:1712.10px;top:118.57px;font:29.33px/29.33px "Liberation Sans",sans-serif;color:#000;-webkit-text-stroke:0.3px #000;'>0.1153846154</div>
<div class="t" style='left:1881.19px;top:160.57px;font:29.33px/29.33px "Liberation Sans",sans-serif;color:#000;-webkit-text-stroke:0.3px #000;'>0</div>
<div class="t" style='left:1881.19px;top:202.57px;font:29.33px/29.33px "Liberation Sans",sans-serif;color:#000;-webkit-text-stroke:0.3px #000;'>0</div>
<div class="t" style='left:1693.61px;top:244.57px;font:29.33px/29.33px "Liberation Sans",sans-serif;color:#000;-webkit-text-stroke:0.3px #000;'>0.03846153846</div>
<div class="t" style='left:1881.19px;top:286.57px;font:29.33px/29.33px "Liberation Sans",sans-serif;color:#000;-webkit-text-stroke:0.3px #000;'>0</div>
<div class="t" style='left:1881.19px;top:328.57px;font:29.33px/29.33px "Liberation Sans",sans-serif;color:#000;-webkit-text-stroke:0.3px #000;'>0</div>
<div class="t" style='left:1947.56px;top:11.52px;font:26.67px/26.67px "Liberation Sans",sans-serif;color:#000;-webkit-text-stroke:0.3px #000;'>Estimate At</div>
<div class="t" style='left:1947.55px;top:43.72px;font:26.67px/26.67px "Liberation Sans",sans-serif;color:#000;-webkit-text-stroke:0.3px #000;'>Completion</div>
<div class="t" style='left:1978.70px;top:75.92px;font:26.67px/26.67px "Liberation Sans",sans-serif;color:#000;-webkit-text-stroke:0.3px #000;'>(EAC)</div>
<div class="t" style='left:2044.10px;top:118.57px;font:29.33px/29.33px "Liberation Sans",sans-serif;color:#000;-webkit-text-stroke:0.3px #000;'>€0.00</div>
<div class="t" style='left:2044.10px;top:160.57px;font:29.33px/29.33px "Liberation Sans",sans-serif;color:#000;-webkit-text-stroke:0.3px #000;'>€0.00</div>
<div class="t" style='left:2044.10px;top:202.57px;font:29.33px/29.33px "Liberation Sans",sans-serif;color:#000;-webkit-text-stroke:0.3px #000;'>€0.00</div>
<div class="t" style='left:1970.71px;top:244.57px;font:29.33px/29.33px "Liberation Sans",sans-serif;color:#000;-webkit-text-stroke:0.3px #000;'>€41,385.50</div>
<div class="t" style='left:2044.10px;top:286.57px;font:29.33px/29.33px "Liberation Sans",sans-serif;color:#000;-webkit-text-stroke:0.3px #000;'>€0.00</div>
<div class="t" style='left:2044.10px;top:328.57px;font:29.33px/29.33px "Liberation Sans",sans-serif;color:#000;-webkit-text-stroke:0.3px #000;'>€0.00</div>
<div class="t" style='left:2165.58px;top:11.52px;font:26.67px/26.67px "Liberation Sans",sans-serif;color:#000;-webkit-text-stroke:0.3px #000;'>Estimate To</div>
<div class="t" style='left:2167.55px;top:43.72px;font:26.67px/26.67px "Liberation Sans",sans-serif;color:#000;-webkit-text-stroke:0.3px #000;'>Completion</div>
<div class="t" style='left:2199.45px;top:75.92px;font:26.67px/26.67px "Liberation Sans",sans-serif;color:#000;-webkit-text-stroke:0.3px #000;'>(ETC)</div>
<div class="t" style='left:2231.48px;top:118.57px;font:29.33px/29.33px "Liberation Sans",sans-serif;color:#000;-webkit-text-stroke:0.3px #000;'>€322.58</div>
<div class="t" style='left:2197.25px;top:160.57px;font:29.33px/29.33px "Liberation Sans",sans-serif;color:#000;-webkit-text-stroke:0.3px #000;'>-€2,617.86</div>
<div class="t" style='left:2207.02px;top:202.57px;font:29.33px/29.33px "Liberation Sans",sans-serif;color:#000;-webkit-text-stroke:0.3px #000;'>€2,071.14</div>
<div class="t" style='left:2231.48px;top:244.57px;font:29.33px/29.33px "Liberation Sans",sans-serif;color:#000;-webkit-text-stroke:0.3px #000;'>€666.31</div>
<div class="t" style='left:2197.25px;top:286.57px;font:29.33px/29.33px "Liberation Sans",sans-serif;color:#000;-webkit-text-stroke:0.3px #000;'>-€4,836.19</div>
<div class="t" style='left:2197.25px;top:328.57px;font:29.33px/29.33px "Liberation Sans",sans-serif;color:#000;-webkit-text-stroke:0.3px #000;'>-€2,073.84</div>
<div class="t" style='left:2387.79px;top:11.52px;font:26.67px/26.67px "Liberation Sans",sans-serif;color:#000;-webkit-text-stroke:0.3px #000;'>Variance At</div>
<div class="t" style='left:2387.55px;top:43.72px;font:26.67px/26.67px "Liberation Sans",sans-serif;color:#000;-webkit-text-stroke:0.3px #000;'>Completion</div>
<div class="t" style='left:2419.69px;top:75.92px;font:26.67px/26.67px "Liberation Sans",sans-serif;color:#000;-webkit-text-stroke:0.3px #000;'>(VAC)</div>
<div class="t" style='left:2484.10px;top:118.57px;font:29.33px/29.33px "Liberation Sans",sans-serif;color:#000;-webkit-text-stroke:0.3px #000;'>€0.00</div>
<div class="t" style='left:2427.02px;top:160.57px;font:29.33px/29.33px "Liberation Sans",sans-serif;color:#000;-webkit-text-stroke:0.3px #000;'>€2,000.00</div>
<div class="t" style='left:2427.02px;top:202.57px;font:29.33px/29.33px "Liberation Sans",sans-serif;color:#000;-webkit-text-stroke:0.3px #000;'>€2,000.00</div>
<div class="t" style='left:2400.94px;top:244.57px;font:29.33px/29.33px "Liberation Sans",sans-serif;color:#000;-webkit-text-stroke:0.3px #000;'>-€39,385.50</div>
<div class="t" style='left:2427.02px;top:286.57px;font:29.33px/29.33px "Liberation Sans",sans-serif;color:#000;-webkit-text-stroke:0.3px #000;'>€2,000.00</div>
<div class="t" style='left:2484.10px;top:328.57px;font:29.33px/29.33px "Liberation Sans",sans-serif;color:#000;-webkit-text-stroke:0.3px #000;'>€0.00</div>
</div>
<div class="a" style="left:2446px;top:204px;width:2px;height:1337px;background:#dcdcdc"></div>
<div class="a" style="left:2448px;top:204px;width:22px;height:1248px;background:#fff"></div>
<div class="a" style="left:2450px;top:220px;width:17.6px;height:50px;border-radius:9px;background:#dadce0"></div>
<div class="a" style="left:2448px;top:1452px;width:22px;height:89px;background:#f8f8f8"></div>
<div class="a" style="left:2448px;top:1452px;width:22px;height:2px;background:#e1e1e1"></div>
<div class="a" style="left:2448px;top:1484px;width:22px;height:2px;background:#e1e1e1"></div>
<div class="a" style="left:0;top:1518px;width:2384px;height:23px;background:#fff"></div>
<div class="a" style="left:2384px;top:1518px;width:62px;height:23px;background:#f8f8f8"></div>
<div class="a" style="left:2384px;top:1518px;width:2px;height:23px;background:#e1e1e1"></div>
<div class="a" style="left:2416px;top:1518px;width:2px;height:23px;background:#e1e1e1"></div>
<div class="a" style="left:239px;top:1520px;width:1116px;height:18px;border-radius:9px;background:#dadce0"></div>
<svg width="2470" height="1546"><g fill="#9e9e9e"><path d="M2453.7 1470 h10.6 l-5.3 -6z"/><path d="M2453.7 1498.4 h10.6 l-5.3 6z"/><path d="M2402 1524 v10.6 l-6 -5.3z"/><path d="M2430 1524 v10.6 l6 -5.3z"/></g></svg>
<div class="a" style="left:0;top:1541.5px;width:3126px;height:2px;background:#e3e5e8"></div>
<div class="a" style="left:0;top:1543px;width:3126px;height:3px;background:#f9fbfd"></div>
<div class="a" style="left:101px;top:1543px;width:182px;height:3px;background:#e1e9f7"></div>
<div class="a" style="left:2502px;top:2px;width:640px;height:1538px;background:#fff;border-radius:32px 0 0 32px;overflow:hidden"></div>
<div class="a" style="left:2502px;top:0;width:624px;height:1540px;overflow:hidden"><div class="a" style="left:-2502px;top:0;width:3126px;height:1546px">
<div class="t" style='left:2607.00px;top:40.77px;font:33px/33px "Liberation Sans",sans-serif;color:#1f1f1f;transform-origin:0 0;transform:scaleX(1.0585);-webkit-text-stroke:0.8px #1f1f1f;'>Chart editor</div>
<div class="a" style="left:2502px;top:114px;width:624px;height:2px;background:#dadce0"></div>
<div class="t" style='left:2606.60px;top:149.42px;font:27.5px/27.5px "Liberation Sans",sans-serif;color:#347d3b;letter-spacing:1.467px;-webkit-text-stroke:1.0px #347d3b;'>Setup</div>
<div class="t" style='left:2895.00px;top:149.42px;font:27.5px/27.5px "Liberation Sans",sans-serif;color:#5f6368;letter-spacing:1.411px;-webkit-text-stroke:1.0px #5f6368;'>Customize</div>
<div class="a" style="left:2590px;top:190px;width:113px;height:6px;background:#347d3b;border-radius:6px 6px 0 0"></div>
<div class="t" style='left:2534.40px;top:216.68px;font:24px/24px "Liberation Sans",sans-serif;color:#5f6368;letter-spacing:-0.122px;'>Chart type</div>
<div class="a" style="left:2534px;top:259.6px;width:539.5px;height:79.8px;border:2px solid #dadce0;border-radius:9px"></div>
<div class="t" style='left:2608.80px;top:286.77px;font:28.5px/28.5px "Liberation Sans",sans-serif;color:#202124;letter-spacing:-0.256px;'>Line chart</div>
<div class="t" style='left:2534.40px;top:386.68px;font:24px/24px "Liberation Sans",sans-serif;color:#5f6368;letter-spacing:-0.305px;'>Data range</div>
<div class="a" style="left:2534px;top:440px;width:476px;height:50px;overflow:hidden">
<div class="t" style='left:0.60px;top:8.94px;font:27px/27px "Liberation Sans",sans-serif;color:#111;transform-origin:0 0;transform:scaleX(0.9263);'>D30:D350,F30:F350,H30:H350,B30:B1000</div>
</div>
<div class="a" style="left:2534px;top:496px;width:543.5px;height:2px;background:#dadce0"></div>
<div class="t" style='left:2534.40px;top:539.48px;font:24px/24px "Liberation Sans",sans-serif;color:#5f6368;letter-spacing:-0.164px;'>Combine ranges</div>
<div class="a" style="left:2534px;top:582px;width:539.5px;height:79.5px;border:2px solid #dadce0;border-radius:9px"></div>
<div class="t" style='left:2553.00px;top:608.47px;font:28.5px/28.5px "Liberation Sans",sans-serif;color:#202124;letter-spacing:-0.107px;'>Horizontally</div>
<div class="t" style='left:2534.60px;top:711.74px;font:27px/27px "Liberation Sans",sans-serif;color:#202124;letter-spacing:1.664px;-webkit-text-stroke:1.0px #202124;'>X-axis</div>
<div class="a" style="left:2534px;top:762px;width:543.5px;height:72px;border-radius:36px;background:#f1f3f4"></div>
<div class="a" style="left:2534px;top:1026px;width:543.5px;height:72px;border-radius:36px;background:#f1f3f4"></div>
<div class="a" style="left:2534px;top:1114px;width:543.5px;height:72px;border-radius:36px;background:#f1f3f4"></div>
<div class="a" style="left:2534px;top:1202px;width:543.5px;height:72px;border-radius:36px;background:#f1f3f4"></div>
<div class="t" style='left:2633.00px;top:783.10px;font:28px/28px "Liberation Sans",sans-serif;color:#3c4043;transform-origin:0 0;transform:scaleX(0.9692);-webkit-text-stroke:0.25px #3c4043;'>B30:B1000</div>
<div class="a" style="left:2534px;top:848px;width:64px;height:84px;overflow:hidden"><div class="a" style="left:-20px;top:2px;width:80px;height:80px;border-radius:40px;background:#f9f9f9"></div></div>
<div class="a" style="left:2536px;top:872px;width:28px;height:28px;border:4px solid #5f6368;border-radius:5px;background:#f8f9fa"></div>
<div class="t" style='left:2598.50px;top:877.30px;font:28px/28px "Liberation Sans",sans-serif;color:#3c4043;transform-origin:0 0;transform:scaleX(0.9906);-webkit-text-stroke:0.25px #3c4043;'>Aggregate</div>
<div class="t" style='left:2534.60px;top:975.44px;font:27px/27px "Liberation Sans",sans-serif;color:#202124;letter-spacing:1.078px;-webkit-text-stroke:1.0px #202124;'>Series</div>
<div class="t" style='left:2633.00px;top:1047.40px;font:28px/28px "Liberation Sans",sans-serif;color:#3c4043;transform-origin:0 0;transform:scaleX(0.9549);-webkit-text-stroke:0.25px #3c4043;'>D30:D350</div>
<div class="t" style='left:2563.50px;top:1050.40px;font:bold 28px/28px "Liberation Sans",sans-serif;color:#5f6368;transform-origin:0 0;transform:scaleX(0.7920);'>123</div>
<div class="t" style='left:2633.00px;top:1135.10px;font:28px/28px "Liberation Sans",sans-serif;color:#3c4043;transform-origin:0 0;transform:scaleX(0.9612);-webkit-text-stroke:0.25px #3c4043;'>F30:F350</div>
<div class="t" style='left:2563.50px;top:1138.10px;font:bold 28px/28px "Liberation Sans",sans-serif;color:#5f6368;transform-origin:0 0;transform:scaleX(0.7920);'>123</div>
<div class="t" style='left:2633.00px;top:1223.10px;font:28px/28px "Liberation Sans",sans-serif;color:#3c4043;transform-origin:0 0;transform:scaleX(0.9803);-webkit-text-stroke:0.25px #3c4043;'>H30:H350</div>
<div class="t" style='left:2563.50px;top:1226.10px;font:bold 28px/28px "Liberation Sans",sans-serif;color:#5f6368;transform-origin:0 0;transform:scaleX(0.7920);'>123</div>
<div class="a" style="left:2534px;top:1291px;width:539.5px;height:66px;border:2px solid #dadce0;border-radius:35px;background:#fff"></div>
<div class="t" style='left:2568.00px;top:1313.60px;font:28px/28px "Liberation Sans",sans-serif;color:#5f6368;letter-spacing:-0.147px;-webkit-text-stroke:1.0px #5f6368;'>Add Series</div>
<div class="a" style="left:2536px;top:1412px;width:28px;height:28px;border:4px solid #5f6368;border-radius:5px;background:#fff"></div>
<div class="t" style='left:2598.50px;top:1417.90px;font:28px/28px "Liberation Sans",sans-serif;color:#3c4043;transform-origin:0 0;transform:scaleX(1.0229);-webkit-text-stroke:0.25px #3c4043;'>Switch rows / columns</div>
<div class="a" style="left:2536px;top:1472px;width:36px;height:36px;border-radius:5px;background:#34733b"></div>
<svg width="3126" height="1546"><path d="M2542.6 1492.4 L2549.4 1499.6 L2565.3 1482.9" fill="none" stroke="#fff" stroke-width="4.6"/></svg>
<div class="t" style='left:2598.50px;top:1477.90px;font:28px/28px "Liberation Sans",sans-serif;color:#3c4043;transform-origin:0 0;transform:scaleX(0.9777);-webkit-text-stroke:0.25px #3c4043;'>Use row 30 as headers</div>
<div class="a" style="left:2514px;top:1509.5px;width:80px;height:80px;border-radius:40px;background:#f6f9f5"></div>
<div class="a" style="left:2536px;top:1533px;width:36px;height:36px;border-radius:5px;background:#34733b"></div>
<svg width="3126" height="1546">
<rect x="2541" y="42" width="34" height="31.4" rx="2.5" fill="none" stroke="#347d3b" stroke-width="4"/>
<rect x="2547.7" y="51.8" width="4.5" height="15.7" fill="#347d3b"/><rect x="2556" y="47" width="4.5" height="20.5" fill="#347d3b"/><rect x="2564.2" y="58" width="4.5" height="9.5" fill="#347d3b"/>
<path d="M3077.2 50.2 L3096.2 69.2 M3096.2 50.2 L3077.2 69.2" fill="none" stroke="#444746" stroke-width="3"/>
<path d="M2552.4 282 V314.2 H2588" fill="none" stroke="#5f6368" stroke-width="1.6"/>
<path d="M2553 306.3 L2569.6 295.2 L2575.8 303 L2587 295" fill="none" stroke="#5f6368" stroke-width="2"/>
<path d="M3033.9 297.5 h15.2 l-7.6 8z" fill="#444746"/>
<path d="M3032.2000000000003 619 h15.2 l-7.6 8z" fill="#444746"/>
<path d="M3029 451.5 H3056.8 V474.5 H3029 Z M3042.9 451.5 V474.5 M3029 463 H3056.8" fill="none" stroke="#80868b" stroke-width="4"/>
<path d="M2568 788.3 h18 v3.8 h-7.1 v17.9 h-3.9 v-17.9 h-7z M2583.7 796.3 h12.5 v3.7 h-4.4 v10 h-3.8 v-10 h-4.3z" fill="#5f6368"/>
<circle cx="3031.8" cy="784" r="4.3" fill="#8e9193"/>
<circle cx="3031.8" cy="796" r="4.3" fill="#8e9193"/>
<circle cx="3031.8" cy="808" r="4.3" fill="#8e9193"/>
<circle cx="3031.8" cy="1048.3" r="4.3" fill="#8e9193"/>
<circle cx="3031.8" cy="1060.3" r="4.3" fill="#8e9193"/>
<circle cx="3031.8" cy="1072.3" r="4.3" fill="#8e9193"/>
<circle cx="3031.8" cy="1136" r="4.3" fill="#8e9193"/>
<circle cx="3031.8" cy="1148" r="4.3" fill="#8e9193"/>
<circle cx="3031.8" cy="1160" r="4.3" fill="#8e9193"/>
<circle cx="3031.8" cy="1224" r="4.3" fill="#8e9193"/>
<circle cx="3031.8" cy="1236" r="4.3" fill="#8e9193"/>
<circle cx="3031.8" cy="1248" r="4.3" fill="#8e9193"/>
</svg>
<div class="a" style="left:3118px;top:232px;width:16px;height:1230px;border-radius:8px;background:#dadce0"></div>
</div></div>
</div></body></html>
